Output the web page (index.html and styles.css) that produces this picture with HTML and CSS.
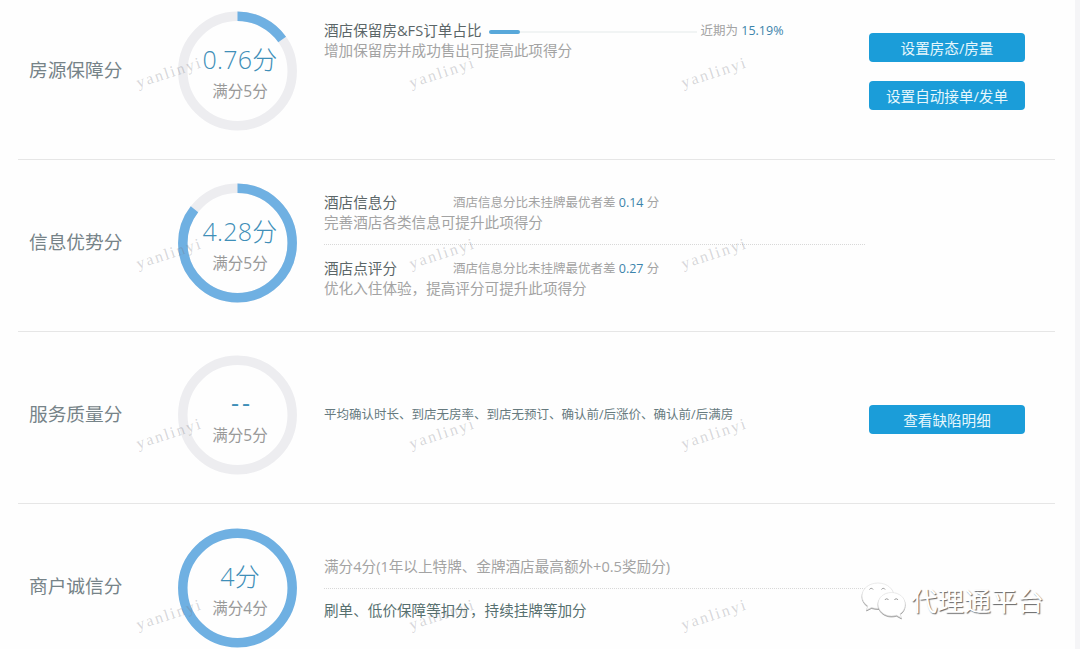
FILE: index.html
```html
<!DOCTYPE html>
<html lang="zh-CN">
<head>
  <meta charset="UTF-8">
  <meta name="viewport" content="width=device-width, initial-scale=1.0">
  <title>酒店服务分</title>
  <link rel="stylesheet" href="styles.css">
</head>
<body>
  <main class="panel">
    <section class="row first">
      <h2 class="label">房源保障分</h2>
      <div class="ring">
        <svg viewBox="0 0 120 120">
          <circle class="track" cx="59.5" cy="60" r="54.7"/>
          <circle class="value" cx="59.5" cy="60" r="54.7" pathLength="100" stroke-dasharray="15.2 100"/>
        </svg>
        <div class="score"><strong>0.76分</strong><span>满分5分</span></div>
      </div>
      <div class="detail">
        <div class="line">
          <span class="name">酒店保留房&amp;FS订单占比</span>
          <span class="bar"><i style="width: 15.19%"></i></span>
          <span class="note">近期为 <b>15.19%</b></span>
        </div>
        <p>增加保留房并成功售出可提高此项得分</p>
      </div>
      <div class="buttons">
        <a class="btn">设置房态/房量</a>
        <a class="btn">设置自动接单/发单</a>
      </div>
    </section>

    <section class="row">
      <h2 class="label">信息优势分</h2>
      <div class="ring">
        <svg viewBox="0 0 120 120">
          <circle class="track" cx="59.5" cy="60" r="54.7"/>
          <circle class="value" cx="59.5" cy="60" r="54.7" pathLength="100" stroke-dasharray="85.6 100"/>
        </svg>
        <div class="score"><strong>4.28分</strong><span>满分5分</span></div>
      </div>
      <div class="detail">
        <div class="item">
          <div class="line">
            <span class="name fixed">酒店信息分</span>
            <span class="note">酒店信息分比未挂牌最优者差 <b>0.14</b> 分</span>
          </div>
          <p>完善酒店各类信息可提升此项得分</p>
        </div>
        <div class="item">
          <div class="line">
            <span class="name fixed">酒店点评分</span>
            <span class="note">酒店信息分比未挂牌最优者差 <b>0.27</b> 分</span>
          </div>
          <p>优化入住体验，提高评分可提升此项得分</p>
        </div>
      </div>
    </section>

    <section class="row">
      <h2 class="label">服务质量分</h2>
      <div class="ring">
        <svg viewBox="0 0 120 120">
          <circle class="track" cx="59.5" cy="60" r="54.7"/>
        </svg>
        <div class="score"><strong class="empty">--</strong><span>满分5分</span></div>
      </div>
      <div class="detail middle">
        <p class="small">平均确认时长、到店无房率、到店无预订、确认前/后涨价、确认前/后满房</p>
      </div>
      <div class="buttons middle">
        <a class="btn">查看缺陷明细</a>
      </div>
    </section>

    <section class="row last">
      <h2 class="label">商户诚信分</h2>
      <div class="ring">
        <svg viewBox="0 0 120 120">
          <circle class="value" cx="59.5" cy="60" r="54.7"/>
        </svg>
        <div class="score"><strong>4分</strong><span>满分4分</span></div>
      </div>
      <div class="detail rules">
        <div class="item"><p>满分4分(1年以上特牌、金牌酒店最高额外+0.5奖励分)</p></div>
        <div class="item"><p class="dark">刷单、低价保障等扣分，持续挂牌等加分</p></div>
      </div>
    </section>
  </main>

  <!-- user name watermark -->
  <div class="watermark">
    <span>yanlinyi</span><span>yanlinyi</span><span>yanlinyi</span>
    <span>yanlinyi</span><span>yanlinyi</span><span>yanlinyi</span>
    <span>yanlinyi</span><span>yanlinyi</span><span>yanlinyi</span>
    <span>yanlinyi</span><span>yanlinyi</span><span>yanlinyi</span>
  </div>

  <div class="account">
    <svg class="wechat" viewBox="0 0 46 38">
      <path d="M17 1C8 1 1 6.600 1 14c0 4 2.200 7.500 5.800 9.900L5.500 28l5-2.500c2 .6 4.200 1 6.500 1 9 0 16-5.600 16-12.500S26 1 17 1z"/>
      <path class="front" d="M30.500 10.500c-7.500 0-13.500 5-13.500 11.500s6 12 13.500 12c1.700 0 3.400-.3 5-.8l5 2.800-1.500-4.200c3.500-2.200 5.200-5.700 5.200-9.800 0-6.500-6.200-11.500-13.700-11.500z"/>
      <path class="eye" d="M8.500 7.500a2 2 0 0 1 3.600 0M20.500 7.500a2 2 0 0 1 3.600 0M24 18a1.800 1.800 0 0 1 3.400 0M33.500 18a1.800 1.800 0 0 1 3.400 0"/>
    </svg>
    <span>代理通平台</span>
  </div>
</body>
</html>
```
FILE: styles.css
```css
* {
  margin: 0;
  padding: 0;
  box-sizing: border-box;
}

body {
  width: 1080px;
  height: 649px;
  overflow: hidden;
  position: relative;
  background-color: #fefefe;
  border-right: 5px solid #f5f5f7;
  font-family: "Open Sans", "Noto Sans CJK SC", sans-serif;
  font-size: 14.6px;
  font-weight: 400;
  color: #a3a3a3;
}

.panel {
  width: 1037px;
  height: 649px;
  margin-left: 18px;
  overflow: hidden;
}

/* One row for each score */
.row {
  display: grid;
  grid-template-columns: 149px 120px 541px 156px;
  height: 172px;
  padding: 23px 0 0 11px;
  border-bottom: 1px solid #e6e6e6;
}

.row.first {
  height: 160px;
  padding-top: 11px;
}

.row.last {
  height: 145px;
  padding-top: 24px;
  border-bottom: none;
}

.label {
  font-size: 18.7px;
  font-weight: 400;
  line-height: 120px;
  height: 120px;
  margin-top: -1px;
  color: #768388;
}

.last .label {
  margin-top: -2px;
}

/* Ring with the score in it */
.ring {
  display: grid;
  width: 120px;
  height: 120px;
}

.ring svg,
.score {
  grid-area: 1 / 1;
}

.ring circle {
  fill: none;
  stroke-width: 9.5;
}

.ring .track {
  stroke: #ededf0;
}

.ring .value {
  stroke: #6fb0e2;
  transform: rotate(-90deg);
  transform-origin: 59.5px 60px;
}

.score {
  display: flex;
  flex-direction: column;
  align-items: center;
  padding: 31px 0 0 4px;
}

.score strong {
  font-size: 25px;
  font-weight: 300;
  line-height: 34px;
  letter-spacing: 0.2px;
  color: #3f8fb8;
}

.score .empty {
  font-weight: 400;
  letter-spacing: 3px;
  line-height: 32px;
  padding: 0 0 2px 4px;
}

.score span {
  margin-top: 4px;
  font-size: 15.5px;
  line-height: 22px;
  color: #999;
}

/* Details */
.detail {
  margin: 7px 0 0 26px;
  width: 541px;
}

.detail p {
  line-height: 21px;
  white-space: nowrap;
}

.detail p.small {
  font-size: 12.5px;
  color: #667a7e;
}

.detail p.dark {
  color: #57706f;
}

.line {
  display: flex;
  align-items: center;
  height: 22px;
  white-space: nowrap;
}

.name {
  color: #5b6668;
}

.name.fixed {
  width: 129px;
}

.note {
  font-size: 12.5px;
}

.note b {
  font-weight: 400;
  color: #3c84ab;
}

.bar {
  width: 208px;
  height: 4px;
  margin: 6px 4px 0 7px;
  background: linear-gradient(#f1f4f4, #f1f4f4) center / 100% 2px no-repeat;
}

.bar i {
  display: block;
  height: 4px;
  border-radius: 2px;
  background-color: #58a8da;
}

.item + .item {
  margin-top: 11px;
  padding-top: 11px;
  border-top: 1px dotted #d8d8d8;
}

.detail.middle {
  margin-top: 49px;
}

.detail.rules {
  margin-top: 28px;
}

/* Buttons */
.buttons {
  display: flex;
  flex-direction: column;
  gap: 19px;
  margin: 22px 0 0 30px;
  width: 156px;
}

.buttons.middle {
  margin-top: 50px;
}

.btn {
  height: 29px;
  line-height: 31px;
  border-radius: 4px;
  background-color: #1b9dd9;
  color: #e6f7fc;
  text-align: center;
}

/* Watermark over the whole page */
.watermark {
  position: absolute;
  top: 62px;
  left: 135px;
  display: grid;
  grid-template-columns: repeat(3, 272.5px);
  grid-template-rows: repeat(3, 180.5px) 24px;
  pointer-events: none;
}

.watermark span {
  width: 72px;
  height: 20px;
  font-family: "Liberation Serif", serif;
  font-size: 16px;
  letter-spacing: 2px;
  line-height: 20px;
  color: rgba(120, 120, 130, 0.3);
  transform: rotate(-18deg);
}

/* Account name in the corner */
.account {
  position: absolute;
  top: 582px;
  left: 861px;
  display: flex;
  align-items: center;
  font-size: 26.6px;
  line-height: 38px;
  color: #fff;
  text-shadow: 1px 1px 1px #666;
}

.wechat {
  width: 46px;
  height: 38px;
  margin-right: 4px;
  overflow: visible;
  fill: #fff;
  stroke: #e4e4e4;
  stroke-width: 0.7;
}

.wechat path {
  filter: drop-shadow(0.5px 1px 0.4px #999);
}

.wechat .eye {
  fill: none;
  stroke: #999;
  stroke-width: 1;
  filter: none;
}
```
